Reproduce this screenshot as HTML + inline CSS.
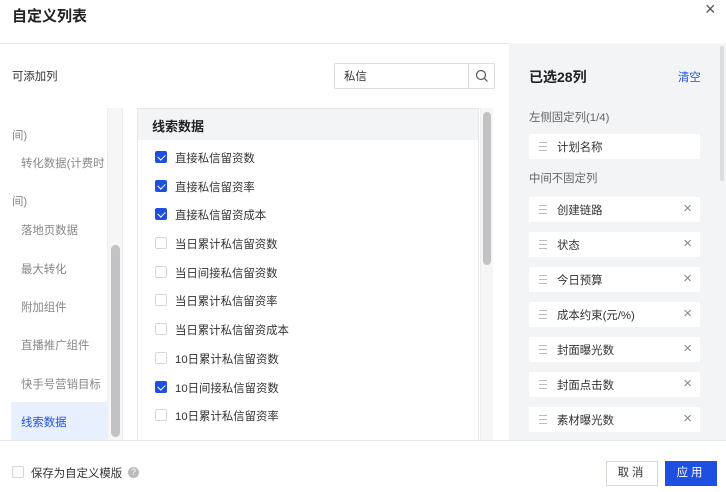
<!DOCTYPE html>
<html><head><meta charset="utf-8"><style>
*{margin:0;padding:0;box-sizing:border-box}
body{width:726px;height:492px;overflow:hidden;background:#fff;font-family:"Liberation Sans","Noto Sans CJK SC",sans-serif;font-size:11.4px;color:#333;position:relative}
.a{position:absolute;white-space:nowrap}
.cb{position:absolute;width:12px;height:12px;border:1px solid #d5d7dc;border-radius:2px;background:#fff}
.cb.on{background:#1f4fe0;border-color:#1f4fe0}
.cb.on::after{content:"";position:absolute;left:3px;top:1px;width:4px;height:6px;border:solid #fff;border-width:0 1.5px 1.5px 0;transform:rotate(45deg)}
.it{position:absolute;left:529px;width:171px;height:25px;background:#fff}
.it .h{position:absolute;left:10px;top:8px;width:8px;height:9px;border-top:1px solid #bbb;border-bottom:1px solid #bbb}
.it .h::after{content:"";position:absolute;left:0;top:3px;width:8px;border-top:1px solid #bbb}
.it .t{position:absolute;left:28px;top:5px;color:#333}
.it .x{position:absolute;right:8px;top:3px;font-size:15px;color:#888}
.nav{position:absolute;left:21px;color:#888}
</style></head><body>
<div class="a" style="left:12px;top:5px;font-size:15px;font-weight:bold;color:#222">自定义列表</div>
<div class="a" style="left:705px;top:-1px;font-size:18px;color:#555">×</div>
<div class="a" style="left:0;top:43px;width:726px;border-top:1px solid #e6e7ea"></div>
<div class="a" style="left:509px;top:43px;width:217px;height:397px;background:#f3f4f6"></div>
<div class="a" style="left:720px;top:46px;width:4px;height:135px;background:#ddd;border-radius:2px"></div>

<div class="a" style="left:12px;top:68px;color:#333">可添加列</div>
<div class="a" style="left:334px;top:63px;width:161px;height:26px;border:1px solid #dcdee2;border-radius:2px"></div>
<div class="a" style="left:468px;top:63px;width:1px;height:26px;background:#dcdee2"></div>
<div class="a" style="left:344px;top:68px">私信</div>
<svg class="a" style="left:475px;top:69px" width="14" height="14" viewBox="0 0 14 14"><circle cx="6" cy="6" r="4.5" fill="none" stroke="#555" stroke-width="1.2"/><path d="M9.3 9.3L12.5 12.5" stroke="#555" stroke-width="1.2"/></svg>

<div class="a" style="left:12px;top:127px;color:#888">间)</div>
<div class="nav" style="top:155px">转化数据(计费时</div>
<div class="a" style="left:12px;top:193px;color:#888">间)</div>
<div class="nav" style="top:222px">落地页数据</div>
<div class="nav" style="top:261px">最大转化</div>
<div class="nav" style="top:299px">附加组件</div>
<div class="nav" style="top:337px">直播推广组件</div>
<div class="nav" style="top:376px">快手号营销目标</div>
<div class="a" style="left:11px;top:402px;width:96px;height:38px;background:#e9f0fd"></div>
<div class="nav" style="top:414px;color:#1f4fe0">线索数据</div>
<div class="a" style="left:107px;top:108px;width:16px;height:332px;background:#f6f6f7;border-left:1px solid #eee;border-right:1px solid #eee"></div>
<div class="a" style="left:111px;top:245px;width:9px;height:192px;background:#c2c2c4;border-radius:5px"></div>

<div class="a" style="left:137px;top:108px;width:342px;height:340px;border:1px solid #e6e7ea"></div>
<div class="a" style="left:138px;top:109px;width:340px;height:31px;background:#f3f4f6"></div>
<div class="a" style="left:152px;top:116px;font-size:13px;font-weight:bold;color:#222">线索数据</div>
<div class="a" style="left:480px;top:108px;width:13px;height:332px;background:#f6f6f7;border-left:1px solid #eee"></div>
<div class="a" style="left:483px;top:112px;width:8px;height:153px;background:#c2c2c4;border-radius:4px"></div>

<div class="cb on" style="left:155px;top:151px"></div><div class="a" style="left:175px;top:150px">直接私信留资数</div>
<div class="cb on" style="left:155px;top:180px"></div><div class="a" style="left:175px;top:179px">直接私信留资率</div>
<div class="cb on" style="left:155px;top:208px"></div><div class="a" style="left:175px;top:207px">直接私信留资成本</div>
<div class="cb" style="left:155px;top:237px"></div><div class="a" style="left:175px;top:236px">当日累计私信留资数</div>
<div class="cb" style="left:155px;top:266px"></div><div class="a" style="left:175px;top:265px">当日间接私信留资数</div>
<div class="cb" style="left:155px;top:294px"></div><div class="a" style="left:175px;top:293px">当日累计私信留资率</div>
<div class="cb" style="left:155px;top:323px"></div><div class="a" style="left:175px;top:322px">当日累计私信留资成本</div>
<div class="cb" style="left:155px;top:352px"></div><div class="a" style="left:175px;top:351px">10日累计私信留资数</div>
<div class="cb on" style="left:155px;top:381px"></div><div class="a" style="left:175px;top:380px">10日间接私信留资数</div>
<div class="cb" style="left:155px;top:409px"></div><div class="a" style="left:175px;top:408px">10日累计私信留资率</div>

<div class="a" style="left:529px;top:67px;font-size:14px;font-weight:bold;color:#222">已选28列</div>
<div class="a" style="left:678px;top:69px;color:#1f4fe0">清空</div>
<div class="a" style="left:529px;top:109px;color:#666">左侧固定列(1/4)</div>
<div class="it" style="top:134px"><div class="h"></div><div class="t">计划名称</div></div>
<div class="a" style="left:529px;top:170px;color:#666">中间不固定列</div>
<div class="it" style="top:197px"><div class="h"></div><div class="t">创建链路</div><div class="x">×</div></div>
<div class="it" style="top:232px"><div class="h"></div><div class="t">状态</div><div class="x">×</div></div>
<div class="it" style="top:267px"><div class="h"></div><div class="t">今日预算</div><div class="x">×</div></div>
<div class="it" style="top:302px"><div class="h"></div><div class="t">成本约束(元/%)</div><div class="x">×</div></div>
<div class="it" style="top:337px"><div class="h"></div><div class="t">封面曝光数</div><div class="x">×</div></div>
<div class="it" style="top:372px"><div class="h"></div><div class="t">封面点击数</div><div class="x">×</div></div>
<div class="it" style="top:407px"><div class="h"></div><div class="t">素材曝光数</div><div class="x">×</div></div>

<div class="a" style="left:0;top:440px;width:726px;height:52px;background:#fff;border-top:1px solid #e6e7ea"></div>
<div class="cb" style="left:12px;top:466px"></div>
<div class="a" style="left:31px;top:465px;color:#333">保存为自定义模版</div>
<div class="a" style="left:128px;top:467px;width:11px;height:11px;border-radius:50%;background:#bbb;color:#fff;font-size:9px;text-align:center;line-height:11px">?</div>
<div class="a" style="left:606px;top:461px;width:52px;height:25px;border:1px solid #d5d7dc;text-align:center;line-height:23px;color:#333;letter-spacing:3px">取消</div>
<div class="a" style="left:665px;top:461px;width:52px;height:25px;background:#1f4fe0;text-align:center;line-height:25px;color:#fff;letter-spacing:3px">应用</div>
</body></html>
